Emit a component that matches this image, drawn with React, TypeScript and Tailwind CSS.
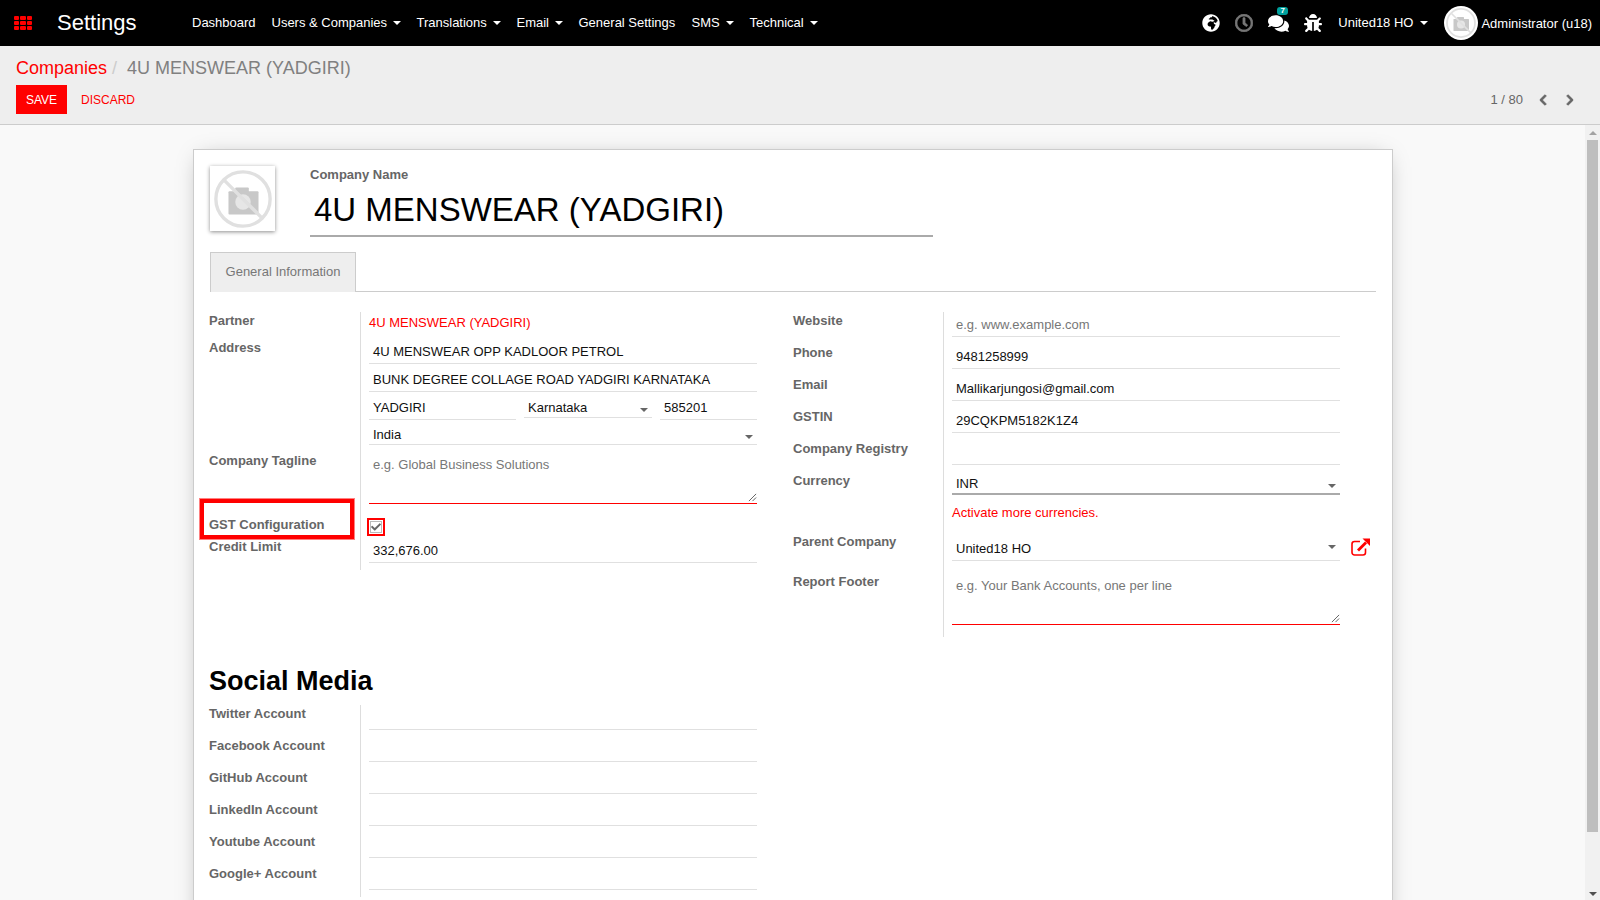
import type { ReactNode } from 'react';
import { FaGlobeAfrica, FaRegClock, FaComments, FaBug, FaChevronLeft, FaChevronRight, FaCheck } from 'react-icons/fa';

const FONT = "font-['Liberation_Sans',Arial,sans-serif]";

function Caret({ className = 'border-t-white' }: { className?: string }) {
  return <span className={`inline-block w-0 h-0 border-x-[4px] border-x-transparent border-t-[4px] ${className}`} />;
}

function NoPhoto({ className }: { className?: string }) {
  return (
    <svg viewBox="0 0 64 64" className={className}>
      <rect x="17" y="24" width="31" height="24" rx="1" fill="#c8c8c8" />
      <rect x="24" y="20" width="14" height="6" rx="1" fill="#c8c8c8" />
      <circle cx="32" cy="35" r="8" fill="#e6e6e6" />
      <circle cx="32" cy="32" r="28" fill="none" stroke="#e0e0e0" strokeWidth="3.5" />
      <path d="M13 13 L51 51" stroke="#e0e0e0" strokeWidth="3.5" />
    </svg>
  );
}

function ExternalLink({ className }: { className?: string }) {
  return (
    <svg viewBox="0 0 19 18" className={className} fill="none" stroke="#ff0000">
      <path d="M9 3.5H3.5a2.5 2.5 0 0 0-2.5 2.5v8.5A2.5 2.5 0 0 0 3.5 17H12a2.5 2.5 0 0 0 2.5-2.5V10.5" strokeWidth="1.6" />
      <path d="M7 12.5L15 4.5" strokeWidth="2.8" />
      <path d="M11.5 0.5H19V8Z" fill="#ff0000" stroke="none" />
    </svg>
  );
}

function NavItem({ label, caret, className }: { label: string; caret?: boolean; className: string }) {
  return (
    <span className={`flex items-center gap-[6px] text-[13px] text-white ${className}`}>
      {label}
      {caret && <Caret />}
    </span>
  );
}

function Navbar() {
  return (
    <div className="h-[46px] bg-black flex items-center shrink-0">
      <div className="ml-[14px] grid grid-cols-3 gap-[1px] w-[18px]">
        {Array.from({ length: 9 }).map((_, i) => (
          <span key={i} className="h-[4px] bg-[#ff0000] rounded-[1px]" />
        ))}
      </div>
      <span className="ml-[25px] w-[135px] pb-[2px] text-[22px] text-white">Settings</span>
      <NavItem label="Dashboard" className="w-[79.5px]" />
      <NavItem label="Users & Companies" caret className="w-[145px]" />
      <NavItem label="Translations" caret className="w-[100px]" />
      <NavItem label="Email" caret className="w-[62px]" />
      <NavItem label="General Settings" className="w-[113px]" />
      <NavItem label="SMS" caret className="w-[58px]" />
      <NavItem label="Technical" caret className="w-[80px]" />
      <div className="ml-auto flex items-center text-white">
        <FaGlobeAfrica className="text-[18px]" />
        <FaRegClock className="ml-[15px] text-[18px] text-[#777] stroke-[24px]" />
        <span className="relative ml-[15px]">
          <FaComments className="text-[21px]" />
          <span className="absolute -top-[6px] left-[9px] h-[8px] w-[11px] rounded-[3px] bg-[#00a09d] text-[8px] leading-[8px] font-bold text-center">7</span>
        </span>
        <FaBug className="ml-[15px] text-[18px]" />
        <span className="ml-[16px] flex items-center gap-[7px] text-[13px]">United18 HO <Caret /></span>
        <span className="ml-[16px] w-[34px] h-[34px] rounded-full bg-white flex items-center justify-center">
          <NoPhoto className="w-[32px] h-[32px]" />
        </span>
        <span className="ml-[3px] mr-[8px] pt-[1px] text-[13px]">Administrator (u18)</span>
      </div>
    </div>
  );
}

function ControlPanel() {
  return (
    <div className="h-[79px] shrink-0 bg-[#eeeeee] border-b border-[#cccccc] pl-[16px] pr-[24px]">
      <div className="h-[39px] pt-[6px] flex items-center text-[18px] text-[#808080]">
        <span className="text-[#ff0000]">Companies</span>
        <span className="ml-[5px] text-[#ccc]">/</span>
        <span className="ml-[10px]">4U MENSWEAR (YADGIRI)</span>
      </div>
      <div className="flex items-center">
        <button className="w-[51px] h-[29px] bg-[#ff0000] text-white text-[12px]">SAVE</button>
        <span className="ml-[14px] text-[12px] text-[#ff0000]">DISCARD</span>
        <span className="ml-auto text-[13px] text-[#666]">1 / 80</span>
        <FaChevronLeft className="ml-[14px] text-[12px] text-[#666] stroke-[40px]" />
        <FaChevronRight className="ml-[15px] text-[12px] text-[#666] stroke-[40px]" />
      </div>
    </div>
  );
}

function Row({ label, top, height, children, left = 9, labelWidth = 151 }: { label?: string; top: number; height: number; children?: ReactNode; left?: number; labelWidth?: number }) {
  return (
    <div className="flex" style={{ height }}>
      <div className="shrink-0 text-[13px] leading-[18px] font-bold text-[#666]" style={{ marginTop: top, width: labelWidth }}>
        {label}
      </div>
      <div className="flex-1 border-l border-[#dddddd]" style={{ paddingLeft: left - 1 }}>
        {children}
      </div>
    </div>
  );
}

// underlined text field, text sits just above the line
function Field({ value, height, placeholder, caret, flush, className = 'w-full', line = 'border-b border-[#e0e0e0]' }: { value?: string; height: number; placeholder?: boolean; caret?: boolean; flush?: boolean; className?: string; line?: string }) {
  return (
    <div className={`flex items-end justify-between px-[4px] text-[13px] leading-[18px] ${flush ? 'pb-0' : 'pb-[2px]'} ${line} ${className} ${placeholder ? 'text-[#777]' : 'text-[#111]'}`} style={{ height }}>
      <span>{value}</span>
      {caret && <span className={`flex ${flush ? 'mb-[5px]' : 'mb-[4px]'}`}><Caret className="border-t-[#666]" /></span>}
    </div>
  );
}

function TextArea({ placeholder, height, pt }: { placeholder: string; height: number; pt: number }) {
  return (
    <div className="relative border-b border-[#ff0000] px-[4px] text-[13px] leading-[18px] text-[#777]" style={{ height, paddingTop: pt }}>
      {placeholder}
      <svg viewBox="0 0 10 10" className="absolute right-0 bottom-[1px] w-[9px] h-[9px]">
        <path d="M1 9 L9 1 M5 9 L9 5" stroke="#555" strokeWidth="1" />
      </svg>
    </div>
  );
}

function LeftGroup() {
  return (
    <div className="relative w-[548px]">
      <Row label="Partner" top={0} height={23}>
        <div className="pt-[2px] text-[13px] leading-[18px] text-[#ff0000]">4U MENSWEAR (YADGIRI)</div>
      </Row>
      <Row label="Address" top={4} height={110}>
        <Field value="4U MENSWEAR OPP KADLOOR PETROL" height={29} />
        <Field value="BUNK DEGREE COLLAGE ROAD YADGIRI KARNATAKA" height={28} />
        <div className="flex justify-between">
          <Field value="YADGIRI" height={28} className="w-[147px]" />
          <Field value="Karnataka" height={26} caret flush className="w-[128px]" />
          <Field value="585201" height={28} className="w-[97px]" />
        </div>
        <Field value="India" height={25} caret flush />
      </Row>
      <Row label="Company Tagline" top={7} height={59}>
        <TextArea placeholder="e.g. Global Business Solutions" height={59} pt={11} />
      </Row>
      <Row label="GST Configuration" top={12} height={36}>
        <div className="mt-[14px] -ml-[2px] w-[18px] h-[18px] border-2 border-[#ff0000] p-[1px]">
          <div className="w-full h-full bg-white border border-[#bbb] flex items-center justify-center">
            <FaCheck className="text-[10px] text-[#666]" />
          </div>
        </div>
      </Row>
      <Row label="Credit Limit" top={-2} height={30}>
        <Field value="332,676.00" height={23} />
      </Row>
    </div>
  );
}

function RightGroup() {
  return (
    <div className="w-[547px] ml-[36px]">
      <Row label="Website" top={0} height={32} labelWidth={150}>
        <Field value="e.g. www.example.com" placeholder height={25} />
      </Row>
      <Row label="Phone" top={0} height={32} labelWidth={150}>
        <Field value="9481258999" height={25} />
      </Row>
      <Row label="Email" top={0} height={32} labelWidth={150}>
        <Field value="Mallikarjungosi@gmail.com" height={25} />
      </Row>
      <Row label="GSTIN" top={0} height={32} labelWidth={150}>
        <Field value="29CQKPM5182K1Z4" height={25} />
      </Row>
      <Row label="Company Registry" top={0} height={32} labelWidth={150}>
        <Field value="" height={25} />
      </Row>
      <Row label="Currency" top={0} height={59} labelWidth={150}>
        <Field value="INR" caret flush height={23} line="border-b-2 border-[#aaaaaa]" />
        <div className="mt-[9px] text-[13px] leading-[18px] text-[#ff0000]">Activate more currencies.</div>
      </Row>
      <Row label="Parent Company" top={2} height={40} labelWidth={150}>
        <div className="relative">
          <Field value="United18 HO" height={30} />
          <span className="absolute right-[4px] top-[14px] flex"><Caret className="border-t-[#666]" /></span>
          <ExternalLink className="absolute -right-[30px] top-[7px] w-[19px] h-[18px]" />
        </div>
      </Row>
      <Row label="Report Footer" top={2} height={66} labelWidth={150}>
        <TextArea placeholder="e.g. Your Bank Accounts, one per line" height={54} pt={6} />
      </Row>
    </div>
  );
}

const SOCIAL = ['Twitter Account', 'Facebook Account', 'GitHub Account', 'LinkedIn Account', 'Youtube Account', 'Google+ Account'];

function Sheet() {
  return (
    <div className="relative mt-[24px] ml-[193px] w-[1200px] h-[860px] bg-white border border-[#cccccc] shadow-[0_2px_22px_-8px_rgba(0,0,0,0.35)] pl-[15px] pr-[16px] pt-[16px]">
      <div className="flex ml-[1px]">
        <div className="w-[65px] h-[65px] bg-white shadow-[0_1px_4px_rgba(0,0,0,0.45)] flex items-center justify-center">
          <NoPhoto className="w-[62px] h-[62px]" />
        </div>
        <div className="ml-[35px] w-[623px] h-[71px] border-b-2 border-[#aaaaaa]">
          <div className="text-[13px] leading-[18px] font-bold text-[#666]">Company Name</div>
          <div className="pl-[4px] mt-[4px] text-[33px] leading-[44px] text-black">4U MENSWEAR (YADGIRI)</div>
        </div>
      </div>
      <div className="mt-[15px] ml-[1px] h-[40px] border-b border-[#cccccc]">
        <div className="w-[146px] h-[40px] pb-[2px] bg-[#eeeeee] border border-b-0 border-[#cccccc] flex items-center justify-center text-[13px] text-[#777]">General Information</div>
      </div>
      <div className="mt-[20px] flex">
        <LeftGroup />
        <RightGroup />
      </div>
      <h2 className="absolute left-[15px] top-[515px] text-[27px] leading-[32px] font-bold text-black">Social Media</h2>
      <div className="absolute left-[15px] top-[555px] w-[548px]">
        {SOCIAL.map((name) => (
          <Row key={name} label={name} top={0} height={32}>
            <Field height={25} />
          </Row>
        ))}
      </div>
      <div className="pointer-events-none absolute left-[6px] top-[349px] w-[154px] h-[40px] border-[4px] border-[#ff0000] outline outline-1 outline-[#ff8080]" />
    </div>
  );
}

export default function App() {
  return (
    <div className={`h-screen w-full flex flex-col overflow-hidden ${FONT}`}>
      <Navbar />
      <ControlPanel />
      <div className="flex-1 flex min-h-0 bg-[#f9f9f9]">
        <div className="flex-1 overflow-hidden">
          <Sheet />
        </div>
        <div className="w-[15px] shrink-0 bg-[#f1f1f1] flex flex-col items-center">
          <span className="mt-[6px] w-0 h-0 border-x-[4px] border-x-transparent border-b-[4px] border-b-[#a3a3a3]" />
          <span className="mt-[5px] w-[11px] h-[692px] bg-[#bebebe]" />
          <span className="mt-auto mb-[4px] w-0 h-0 border-x-[4px] border-x-transparent border-t-[4px] border-t-[#505050]" />
        </div>
      </div>
    </div>
  );
}
